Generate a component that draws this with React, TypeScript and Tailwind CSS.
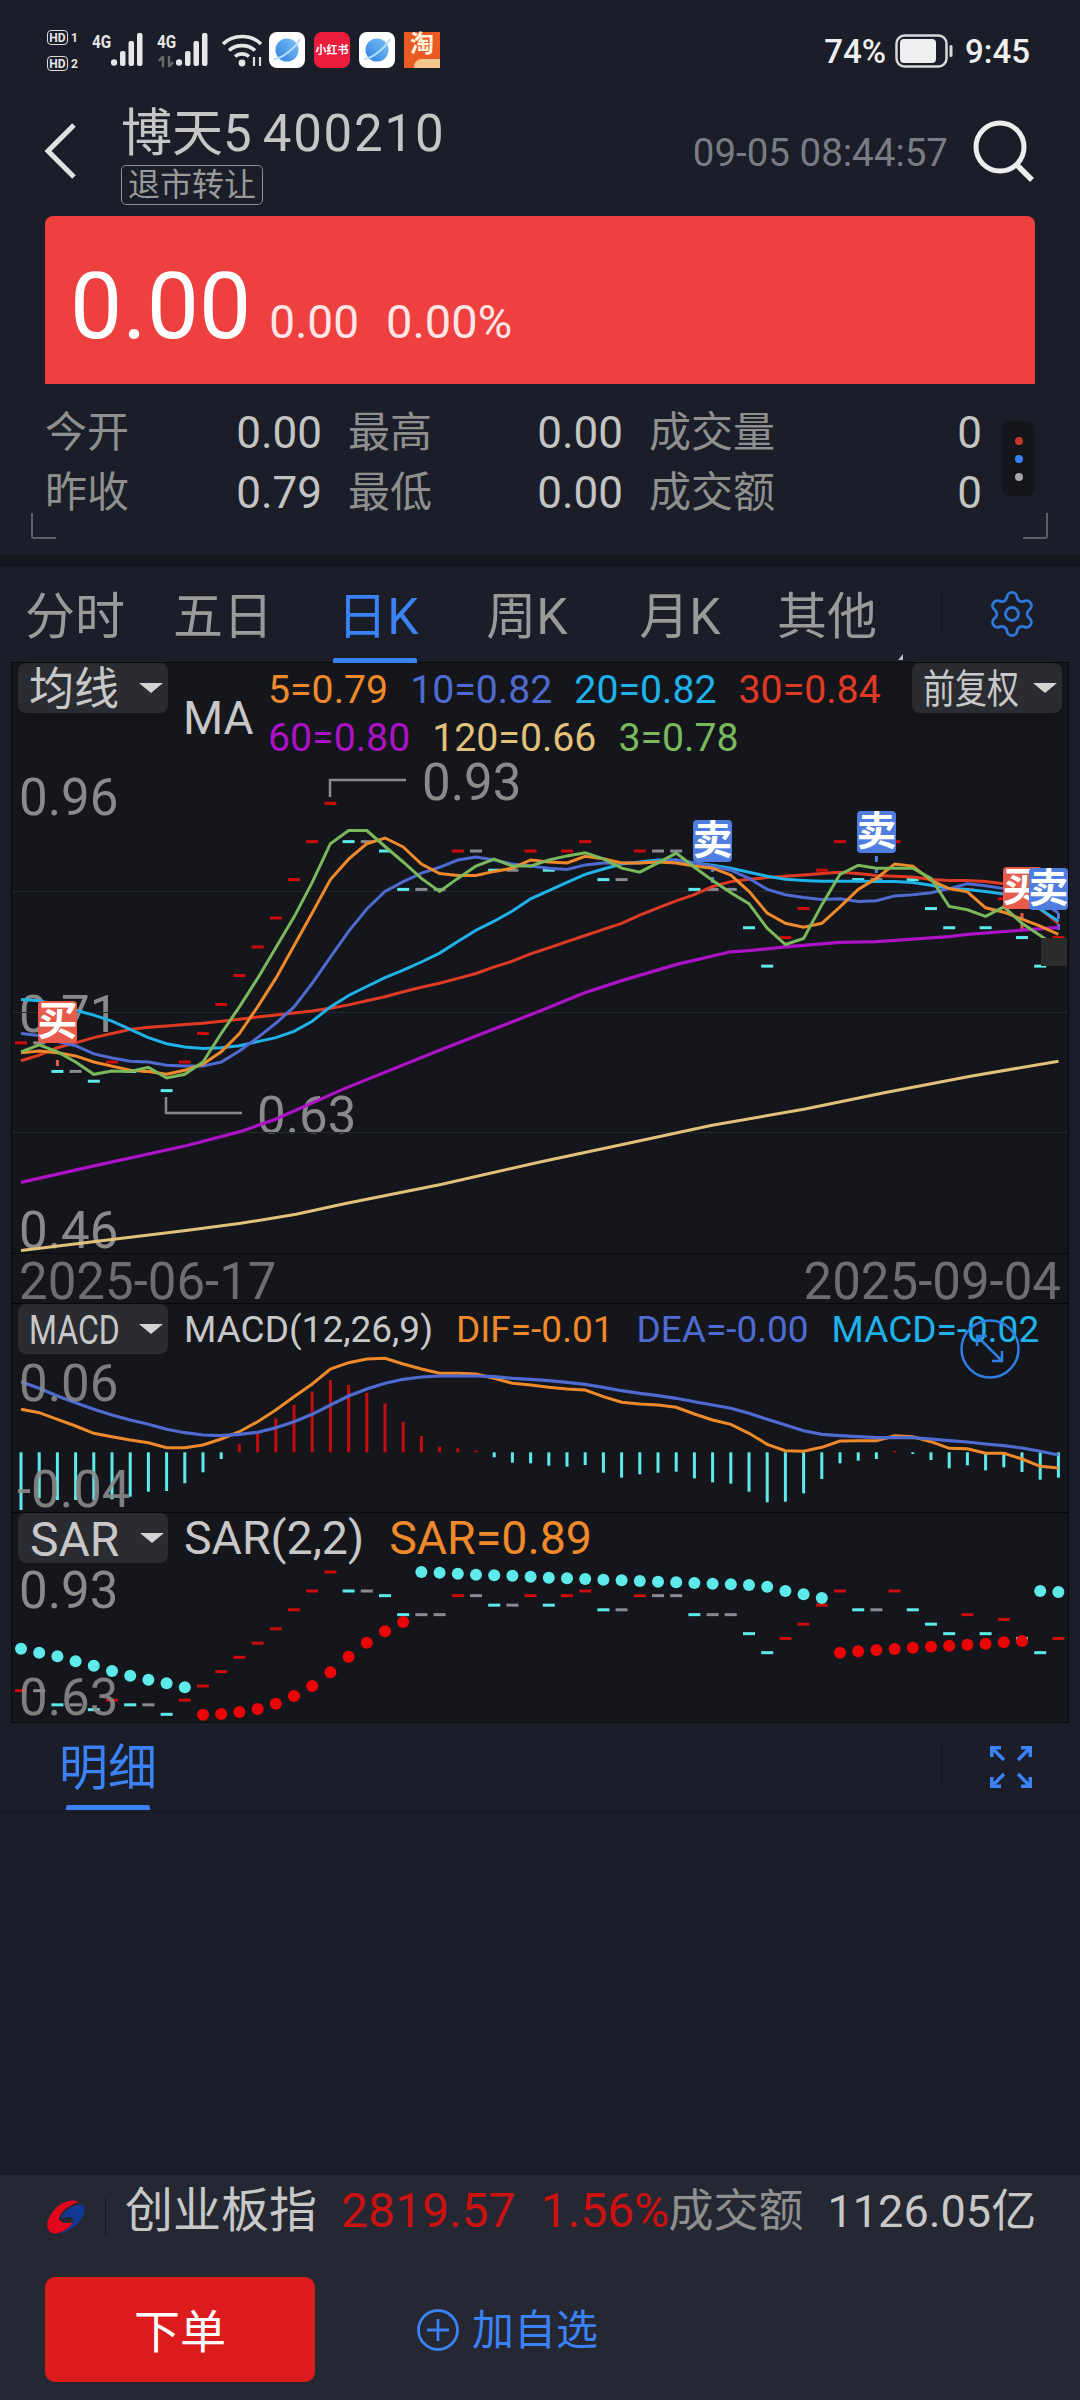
import React from 'react';
import { Settings } from 'lucide-react';

const FONT = "font-['Roboto','Noto_Sans_CJK_SC',sans-serif]";

const X = (i: number) => 21 + 18.2 * i;
const mainY = (z: number) => 660 + z / 2.45;
const lowY = (z: number) => 1290 + z / 3;
const line = (vals: number[], toY: (z: number) => number) =>
  vals.map((z, i) => `${X(i).toFixed(1)},${toY(z).toFixed(1)}`).join(' ');
const freeLine = (vals: number[][]) =>
  vals.map(([x, z]) => `${(x / 2.904).toFixed(1)},${mainY(z).toFixed(1)}`).join(' ');

const COLORS = {
  orange: '#f0892a',
  blue: '#4f6bd1',
  cyan: '#1fb3ea',
  red: '#e03a24',
  purple: '#ad12c7',
  tan: '#e2c27a',
  green: '#7ab85c',
  down: '#5eeaea',
  up: '#e00a0a',
};

const ma5 = [962, 958, 962, 970, 985, 995, 1005, 1008, 1015, 1005, 990, 960, 915, 850, 780, 700, 620, 538, 488, 450, 436, 458, 500, 523, 528, 528, 518, 510, 490, 495, 497, 481, 487, 497, 497, 495, 497, 505, 510, 527, 567, 620, 645, 655, 645, 605, 562, 535, 500, 505, 540, 560, 568, 607, 618, 635, 652, 672];
const ma10 = [915, 920, 935, 945, 965, 975, 983, 985, 993, 995, 995, 985, 958, 925, 890, 850, 792, 728, 665, 610, 567, 543, 522, 508, 490, 483, 490, 500, 505, 510, 513, 502, 497, 497, 497, 493, 490, 497, 505, 515, 535, 562, 575, 582, 587, 585, 592, 590, 578, 575, 570, 560, 548, 553, 560, 572, 590, 620];
const ma20 = [832, 835, 845, 858, 870, 885, 905, 925, 940, 948, 952, 950, 945, 935, 925, 910, 885, 850, 822, 800, 778, 760, 740, 718, 690, 662, 640, 615, 585, 565, 545, 525, 512, 500, 495, 490, 490, 497, 503, 510, 520, 530, 537, 540, 542, 542, 542, 543, 543, 545, 552, 560, 562, 567, 573, 590, 610, 640];
const ma30 = [982, 968, 950, 938, 925, 915, 905, 900, 897, 893, 890, 885, 880, 875, 870, 865, 860, 853, 845, 835, 825, 813, 802, 792, 780, 768, 752, 738, 720, 705, 690, 675, 660, 645, 625, 607, 590, 575, 555, 543, 537, 533, 530, 527, 523, 520, 523, 528, 530, 532, 538, 540, 540, 543, 548, 580, 610, 645];
const ma3 = [960, 943, 960, 985, 1015, 1007, 1008, 998, 1024, 1015, 985, 915, 850, 780, 705, 630, 545, 450, 418, 418, 457, 495, 535, 567, 535, 505, 488, 505, 505, 490, 480, 472, 487, 510, 520, 497, 473, 508, 540, 570, 597, 657, 697, 682, 600, 525, 503, 510, 510, 510, 535, 604, 612, 628, 605, 645, 675, 705];
const ma60 = [[61, 1280], [270, 1240], [540, 1190], [700, 1155], [800, 1125], [1000, 1050], [1280, 955], [1568, 860], [1698, 815], [1808, 785], [1968, 745], [2122, 715], [2175, 712], [2281, 703], [2439, 692], [2545, 690], [2757, 678], [2809, 672], [2968, 662], [3074, 655]];
const ma120 = [[61, 1447], [540, 1398], [700, 1380], [860, 1358], [1000, 1332], [1280, 1285], [1568, 1230], [1818, 1185], [2068, 1140], [2338, 1100], [2568, 1060], [2818, 1020], [3074, 983]];

// closing dashes: [zoom y, colour]
const dashes: [number, string][] = [
  [938, 'r'], [938, 'g'], [1008, 'c'], [1008, 'g'], [1032, 'c'], [985, 'r'], [1008, 'c'], [1008, 'g'], [1055, 'c'], [985, 'r'],
  [915, 'r'], [844, 'r'], [773, 'r'], [703, 'r'], [632, 'r'], [538, 'r'], [445, 'r'], [351, 'r'], [445, 'c'], [445, 'g'],
  [468, 'c'], [562, 'c'], [562, 'g'], [562, 'g'], [468, 'r'], [468, 'g'], [515, 'c'], [515, 'g'], [468, 'r'], [515, 'c'],
  [468, 'r'], [445, 'r'], [538, 'c'], [538, 'g'], [468, 'r'], [468, 'g'], [468, 'g'], [562, 'c'], [562, 'g'], [562, 'g'],
  [656, 'c'], [750, 'c'], [680, 'r'], [609, 'r'], [515, 'r'], [445, 'r'], [538, 'c'], [538, 'g'], [445, 'r'], [538, 'c'],
  [609, 'c'], [656, 'c'], [562, 'r'], [656, 'c'], [585, 'r'], [680, 'c'], [750, 'c'], [680, 'r'],
];
const dashColor: Record<string, string> = { r: '#cc0c0c', c: '#5eeaea', g: '#8a8a92' };

const dif = [358, 368, 388, 408, 430, 440, 450, 458, 473, 473, 465, 447, 425, 395, 360, 320, 282, 237, 218, 207, 205, 222, 237, 250, 250, 252, 265, 280, 285, 292, 297, 300, 320, 337, 342, 345, 352, 372, 390, 403, 430, 463, 482, 484, 472, 453, 452, 452, 437, 440, 455, 475, 476, 490, 490, 507, 529, 534];
const dea = [275, 295, 318, 338, 358, 375, 390, 403, 418, 428, 435, 437, 433, 427, 413, 395, 373, 345, 318, 297, 280, 268, 261, 258, 258, 258, 260, 265, 268, 272, 277, 283, 292, 302, 310, 317, 325, 335, 345, 355, 370, 388, 405, 422, 433, 437, 440, 443, 443, 443, 447, 452, 456, 462, 467, 474, 484, 495];
const hist = [660, 625, 630, 630, 630, 628, 620, 605, 603, 580, 547, 507, 463, 430, 385, 345, 305, 270, 285, 308, 340, 395, 438, 470, 475, 482, 502, 518, 520, 527, 530, 525, 548, 563, 553, 548, 545, 565, 577, 581, 605, 637, 635, 610, 567, 520, 512, 507, 483, 492, 510, 535, 526, 541, 532, 546, 569, 563];

const sarDots: [number, number, string][] = [
  ...[1076, 1088, 1099, 1114, 1127, 1143, 1157, 1169, 1180, 1192].map((z, i) => [i, z, COLORS.down] as [number, number, string]),
  ...[1274, 1272, 1266, 1257, 1241, 1218, 1188, 1147, 1100, 1058, 1024, 996].map((z, i) => [i + 10, z, '#ea0606'] as [number, number, string]),
  ...[846, 848, 851, 854, 856, 857, 860, 863, 865, 867, 869, 871, 873, 875, 877, 879, 881, 883, 885, 890, 903, 913, 924].map((z, i) => [i + 22, z, COLORS.down] as [number, number, string]),
  ...[1088, 1084, 1080, 1077, 1073, 1070, 1067, 1064, 1061, 1057, 1053].map((z, i) => [i + 45, z, '#ea0606'] as [number, number, string]),
  [56, 903, COLORS.down],
  [57, 906, COLORS.down],
];

function Dropdown({ label, size = 'normal' }: { label: string; size?: 'normal' | 'condensed' | 'large' }) {
  const textClass = {
    normal: 'text-[45px]',
    condensed: 'origin-left scale-x-[0.8] text-[40px]',
    large: 'ml-[1px] text-[48px]',
  }[size];
  return (
    <div className="flex h-[50px] w-[150px] items-center rounded-[8px] bg-[#2a2c31] pl-[11px]">
      <span className={`mt-[3px] w-[104px] whitespace-nowrap leading-none text-[#c8c8c8] ${textClass}`}>
        {label}
      </span>
      <span className="ml-[6px] h-0 w-0 border-x-[12px] border-t-[10px] border-x-transparent border-t-[#d4d4d4]" />
    </div>
  );
}

function Signal({ kind, className }: { kind: '买' | '卖'; className: string }) {
  return (
    <div className={`absolute flex h-[42px] w-[39px] items-center justify-center rounded-[4px] text-[40px] leading-none font-bold text-white ${kind === '买' ? 'bg-[#e85a4a]' : 'bg-[#4f7de0]'} ${className}`}>
      {kind}
    </div>
  );
}

function StatCell({ label, value }: { label: string; value: string }) {
  return (
    <div className="flex h-[60px] items-center justify-between pt-[2px]">
      <span className="text-[42px] leading-none text-[#8f8f8f]">{label}</span>
      <span className="text-[44px] leading-none text-[#c4c4c4]">{value}</span>
    </div>
  );
}

function Tab({ label, className, active }: { label: string; className: string; active?: boolean }) {
  return (
    <div className={`relative flex h-full items-center justify-center pt-[4px] text-[50px] leading-none ${active ? 'text-[#3b82f6]' : 'text-[#9a9a9a]'} ${className}`}>
      {label}
      {active && <span className="absolute bottom-0 left-[37px] h-[5px] w-[84px] rounded-t-[2px] bg-[#3b82f6]" />}
    </div>
  );
}

function Signal4G({ dim }: { dim?: boolean }) {
  return (
    <div className="relative h-[36px] w-[55px]">
      <span className="absolute top-0 left-0 origin-left scale-x-[0.85] text-[18px] leading-none font-bold text-[#e6e6e6]">4G</span>
      {dim && (
        <svg className="absolute bottom-[2px] left-0" width="18" height="11" viewBox="0 0 18 11">
          <path d="M6 0v11M6 0 2 5M12 11V0m0 11 4-5" stroke="#6a6a6a" strokeWidth="2.4" fill="none" />
        </svg>
      )}
      <svg className="absolute top-0 left-[19px]" width="36" height="33" viewBox="0 0 36 33">
        <circle cx="3" cy="29.5" r="3.2" fill="#e6e6e6" />
        <rect x="9" y="18" width="5.5" height="15" rx="2" fill="#e6e6e6" />
        <rect x="17.500" y="8" width="5.500" height="25" rx="2" fill="#e6e6e6" />
        <rect x="26" y="0" width="5.500" height="33" rx="2" fill="#e6e6e6" />
      </svg>
    </div>
  );
}

function PlanetIcon() {
  return (
    <div className="flex h-[36px] w-[36px] items-center justify-center rounded-[8px] bg-white">
      <svg width="30" height="30" viewBox="0 0 30 30">
        <defs>
          <linearGradient id="pl" x1="0" y1="1" x2="1" y2="0">
            <stop offset="0" stopColor="#2f7fe0" />
            <stop offset="1" stopColor="#7cc2f6" />
          </linearGradient>
        </defs>
        <circle cx="15" cy="15" r="11.500" fill="url(#pl)" />
        <path d="M2 24C10 24 24 12 28 4" stroke="#b7def9" strokeWidth="2" fill="none" />
      </svg>
    </div>
  );
}

function StatusBar() {
  return (
    <div className="flex h-[100px] items-start justify-between pt-[30px] pr-[50px] pl-[47px]">
      <div className="flex items-start">
        <div className="flex h-[41px] w-[37px] flex-col justify-between">
          {['1', '2'].map((n) => (
            <div key={n} className="flex items-center gap-[3px]">
              <span className="flex h-[15px] w-[21px] items-center justify-center rounded-[4px] border border-[#dcdcdc] text-[12px] leading-none font-bold text-[#e6e6e6]">HD</span>
              <span className="text-[12px] leading-none font-bold text-[#e6e6e6]">{n}</span>
            </div>
          ))}
        </div>
        <div className="ml-[8px] flex pt-[3px]">
          <Signal4G />
          <div className="ml-[10px]">
            <Signal4G dim />
          </div>
        </div>
        <svg className="mt-[3px] ml-[10px]" width="44" height="34" viewBox="0 0 44 34" fill="none">
          <path d="M1 11C11 1 29 1 39 11" stroke="#e6e6e6" strokeWidth="3.6" />
          <path d="M7 17.500C14 11 26 11 33 17.500" stroke="#e6e6e6" strokeWidth="3.6" />
          <path d="M13 23.500C17 20 23 20 27 23.500" stroke="#e6e6e6" strokeWidth="3.6" />
          <circle cx="20" cy="30" r="3.400" fill="#e6e6e6" />
          <path d="M32 24v9M38 33v-9" stroke="#dcdcdc" strokeWidth="2.200" />
        </svg>
        <div className="ml-[3px] flex gap-[9px] pt-[2px]">
          <PlanetIcon />
          <div className="flex h-[36px] w-[36px] items-center justify-center rounded-[8px] bg-[#ee1c3c] text-[11px] leading-none font-bold whitespace-nowrap text-white">小红书</div>
          <PlanetIcon />
          <div className="relative flex h-[36px] w-[36px] items-start justify-center bg-[#ea5a24] text-[24px] leading-none font-bold text-[#fff3dc]">
            淘
            <span className="absolute right-0 bottom-0 h-[9px] w-[26px] rounded-tl-[8px] bg-[#f3c78a]" />
          </div>
        </div>
      </div>
      <div className="flex items-center pt-[4px] text-[33px] leading-none font-medium text-[#efefef]">
        <span>74%</span>
        <svg className="ml-[9px]" width="58" height="34" viewBox="0 0 58 34" fill="none">
          <rect x="1.500" y="1.500" width="50" height="31" rx="8" stroke="#d8d8d8" strokeWidth="2.500" />
          <rect x="5" y="5" width="36" height="24" rx="4" fill="#efefef" />
          <rect x="54.500" y="11" width="3" height="12" rx="1.500" fill="#d8d8d8" />
        </svg>
        <span className="ml-[12px]">9:45</span>
      </div>
    </div>
  );
}

function Header() {
  return (
    <div className="flex h-[116px] pr-[44px] pl-[44px]">
      <svg className="mt-[22px]" width="34" height="58" viewBox="0 0 34 58" fill="none">
        <path d="M30 3 4 29l26 26" stroke="#e2e2e2" strokeWidth="5" />
      </svg>
      <div className="ml-[43px] flex flex-col">
        <div className="flex h-[64px] items-center pt-[2px] text-[51px] leading-none text-[#c6c6c6]">
          <span>博天5</span>
          <span className="ml-[11px] tracking-[1.8px]">400210</span>
        </div>
        <div className="mt-[1px] flex h-[40px] w-[142px] items-center justify-center rounded-[5px] border border-[#8f8f8f] text-[32px] leading-none text-[#9a9a9a]">退市转让</div>
      </div>
      <span className="mt-[34px] ml-auto text-[38.500px] leading-none text-[#797c84]">09-05 08:44:57</span>
      <svg className="mt-[19px] ml-[24px]" width="64" height="64" viewBox="0 0 64 64" fill="none">
        <circle cx="28" cy="28" r="24" stroke="#eeeeee" strokeWidth="5" />
        <path d="M45 46 60 61" stroke="#eeeeee" strokeWidth="5.500" />
      </svg>
    </div>
  );
}

function PriceCard() {
  return (
    <div className="mx-[45px] flex h-[168px] items-baseline rounded-t-[8px] bg-[#ef4040] pt-[44px] pl-[25px] text-white">
      <span className="text-[93px] leading-none">0.00</span>
      <span className="ml-[18px] text-[46px] leading-none text-[#ffe6e6]">0.00</span>
      <span className="ml-[27px] text-[47px] leading-none text-[#ffe6e6]">0.00%</span>
    </div>
  );
}

function Stats() {
  return (
    <div className="relative h-[171px] pt-[18px] pl-[45px]">
      <div className="grid w-[937px] grid-cols-[277px_275px_333px] gap-x-[26px]">
        <StatCell label="今开" value="0.00" />
        <StatCell label="最高" value="0.00" />
        <StatCell label="成交量" value="0" />
        <StatCell label="昨收" value="0.79" />
        <StatCell label="最低" value="0.00" />
        <StatCell label="成交额" value="0" />
      </div>
      <div className="absolute top-[37px] left-[1002px] flex h-[75px] w-[33px] flex-col items-center justify-center gap-[10px] rounded-[8px] bg-[#14161b]">
        <span className="h-[8px] w-[8px] rounded-full bg-[#c0392b]" />
        <span className="h-[8px] w-[8px] rounded-full bg-[#3b82f6]" />
        <span className="h-[8px] w-[8px] rounded-full bg-[#a8a8a8]" />
      </div>
      <span className="absolute top-[129px] left-[31px] h-[26px] w-[25px] rounded-bl-[3px] border-b-[2px] border-l-[2px] border-[#5d5f66]" />
      <span className="absolute top-[129px] left-[1023px] h-[26px] w-[25px] rounded-br-[3px] border-r-[2px] border-b-[2px] border-[#5d5f66]" />
    </div>
  );
}

function Tabs() {
  return (
    <div className="relative flex h-[96px] items-stretch">
      <Tab label="分时" className="w-[150px]" />
      <Tab label="五日" className="w-[146px]" />
      <Tab label="日K" className="w-[164px]" active />
      <Tab label="周K" className="w-[134px]" />
      <Tab label="月K" className="w-[172px]" />
      <Tab label="其他" className="w-[122px]" />
      <span className="mt-[22px] ml-[53px] h-[46px] w-[1px] bg-[#14161b]" />
      <Settings className="mt-[21px] ml-[44px] h-[52px] w-[52px] text-[#2f78d8]" strokeWidth={1.3} />
      <span className="absolute bottom-[3px] left-[898px] h-0 w-0 border-b-[6px] border-l-[5px] border-b-[#bdbdbd] border-l-transparent" />
    </div>
  );
}

function MainChart() {
  return (
    <div className="relative h-[590px]">
      <span className="absolute top-[109px] left-[7px] text-[51px] leading-none text-[#8a8a8a]">0.96</span>
      <span className="absolute top-[326px] left-[7px] text-[51px] leading-none text-[#8a8a8a]">0.71</span>
      <span className="absolute top-[542px] left-[7px] text-[51px] leading-none text-[#8a8a8a]">0.46</span>
      <span className="absolute top-[94px] left-[410px] text-[51px] leading-none text-[#8a8a8a]">0.93</span>
      <span className="absolute top-[427px] left-[245px] text-[51px] leading-none text-[#8a8a8a]">0.63</span>

      <svg className="absolute inset-0" width="1056" height="590" viewBox="12 663 1056 590" fill="none">
        {[891, 1012, 1132].map((y) => (
          <rect key={y} x="12" y={y} width="1056" height="1" fill="#24272b" />
        ))}
        <path d="M330 797V780H406M166 1097V1113H242" stroke="#8a8a8a" strokeWidth="2.500" />
        {dashes.map(([z, c], i) => (
          <rect key={i} x={X(i) - 6} y={mainY(z) - 1.5} width="12" height="3" fill={dashColor[c]} />
        ))}
        <path d={`M${X(2)} ${mainY(980)}V${mainY(996)}M${X(55)} ${mainY(620)}V${mainY(665)}`} stroke="#e85a4a" strokeWidth="3" strokeDasharray="6 5" />
        <path d={`M${X(38)} ${mainY(505)}V${mainY(548)}M${X(47)} ${mainY(480)}V${mainY(540)}M${X(57)} ${mainY(620)}V${mainY(665)}`} stroke="#4f7de0" strokeWidth="3" strokeDasharray="6 5" />
        <polyline points={freeLine(ma120)} stroke={COLORS.tan} strokeWidth="3" />
        <polyline points={freeLine(ma60)} stroke={COLORS.purple} strokeWidth="3.200" />
        <polyline points={line(ma30, mainY)} stroke={COLORS.red} strokeWidth="3" />
        <polyline points={line(ma20, mainY)} stroke={COLORS.cyan} strokeWidth="3" />
        <polyline points={line(ma10, mainY)} stroke={COLORS.blue} strokeWidth="3" />
        <polyline points={line(ma5, mainY)} stroke={COLORS.orange} strokeWidth="3" />
        <polyline points={line(ma3, mainY)} stroke={COLORS.green} strokeWidth="3" />
      </svg>

      <div className="absolute top-0 left-[6px]">
        <Dropdown label="均线" />
      </div>
      <div className="absolute top-0 left-[900px]">
        <Dropdown label="前复权" size="condensed" />
      </div>
      <span className="absolute top-[32px] left-[171px] text-[46px] leading-none text-[#c8c8c8]">MA</span>
      <div className="absolute top-[8px] left-[256px] flex gap-[22px] text-[39.250px] leading-none">
        <span className="text-[#f0892a]">5=0.79</span>
        <span className="text-[#4f6bd1]">10=0.82</span>
        <span className="text-[#1fb3ea]">20=0.82</span>
        <span className="text-[#e03a24]">30=0.84</span>
      </div>
      <div className="absolute top-[56px] left-[256px] flex gap-[22px] text-[39.250px] leading-none">
        <span className="text-[#ad12c7]">60=0.80</span>
        <span className="text-[#e2c27a]">120=0.66</span>
        <span className="text-[#7ab85c]">3=0.78</span>
      </div>

      <div className="absolute top-[275px] left-[1029px] h-[28px] w-[26px] bg-[#2c2c2c]" />
      <Signal kind="买" className="top-[338px] left-[26px]" />
      <Signal kind="卖" className="top-[157px] left-[681px]" />
      <Signal kind="卖" className="top-[148px] left-[845px]" />
      <Signal kind="买" className="top-[204px] left-[991px]" />
      <Signal kind="卖" className="top-[205px] left-[1017px]" />
    </div>
  );
}

function MacdChart() {
  return (
    <div className="relative h-[209px] border-b border-[#08090b]">
      <svg className="absolute inset-0" width="1056" height="209" viewBox="12 1304 1056 209" fill="none">
        {hist.map((z, i) => {
          const base = lowY(487);
          const y = lowY(z);
          return (
            <rect
              key={i}
              x={X(i) - 1.5}
              y={Math.min(base, y)}
              width="3"
              height={Math.abs(y - base)}
              fill={z < 487 ? '#c40c0c' : COLORS.down}
            />
          );
        })}
        <polyline points={line(dif, lowY)} stroke={COLORS.orange} strokeWidth="3" />
        <polyline points={line(dea, lowY)} stroke={COLORS.blue} strokeWidth="3.200" />
      </svg>
      <span className="absolute top-[54px] left-[7px] text-[51px] leading-none text-[#8a8a8a] opacity-90">0.06</span>
      <span className="absolute top-[160px] left-[5px] text-[51px] leading-none text-[#8a8a8a] opacity-90">-0.04</span>
      <div className="absolute top-0 left-[6px]">
        <Dropdown label="MACD" size="condensed" />
      </div>
      <div className="absolute top-[6px] left-[172px] flex items-center gap-[23px] text-[37px] leading-[40px] whitespace-nowrap">
        <span className="text-[#c8c8c8]">MACD(12,26,9)</span>
        <span className="text-[#f0892a]">DIF=-0.01</span>
        <span className="text-[#4f6bd1]">DEA=-0.00</span>
        <span className="text-[#1fb3ea]">MACD=-0.02</span>
      </div>
      <svg className="absolute top-[15px] left-[948px]" width="60" height="60" viewBox="0 0 60 60" fill="none" stroke="#2f7fe0" strokeWidth="2.500">
        <circle cx="30" cy="30" r="28.500" />
        <path d="M17 17 42 42M17 27V17H27M32 42H42V32" />
      </svg>
    </div>
  );
}

function SarChart() {
  return (
    <div className="relative h-[209px]">
      <svg className="absolute inset-0" width="1056" height="209" viewBox="12 1513 1056 209" fill="none">
        {dashes.map(([z, c], i) => (
          <rect key={i} x={X(i) - 6} y={lowY(846 + (z - 351) * 0.6065) - 1.5} width="12" height="3" fill={dashColor[c]} />
        ))}
        {sarDots.map(([i, z, c]) => (
          <circle key={i} cx={X(i)} cy={lowY(z)} r="6" fill={c} />
        ))}
      </svg>
      <span className="absolute top-[52px] left-[7px] text-[51px] leading-none text-[#8a8a8a]">0.93</span>
      <span className="absolute top-[159px] left-[7px] text-[51px] leading-none text-[#8a8a8a] opacity-90">0.63</span>
      <div className="absolute top-0 left-[6px]">
        <Dropdown label="SAR" size="large" />
      </div>
      <div className="absolute top-[2px] left-[172px] flex items-center gap-[25px] text-[46.500px] leading-[46px] whitespace-nowrap">
        <span className="text-[#c8c8c8]">SAR(2,2)</span>
        <span className="text-[#f0892a]">SAR=0.89</span>
      </div>
    </div>
  );
}

function Chart() {
  return (
    <div className="mx-[12px] w-[1056px] bg-[#14161c] ring-1 ring-[#08090b]">
      <MainChart />
      <div className="flex h-[51px] items-center justify-between border-y border-[#08090b] px-[7px] pt-[6px] text-[51px] leading-none text-[#6e6e6e]">
        <span>2025-06-17</span>
        <span>2025-09-04</span>
      </div>
      <MacdChart />
      <SarChart />
    </div>
  );
}

function DetailTab() {
  return (
    <div className="flex h-[91px] items-start border-b border-[#14161b]">
      <div className="relative ml-[58px] flex h-[88px] w-[100px] items-center justify-center pt-[4px] text-[49px] leading-none text-[#3b82f6]">
        明细
        <span className="absolute bottom-0 left-[8px] h-[5px] w-[84px] rounded-t-[2px] bg-[#3b82f6]" />
      </div>
      <span className="mt-[22px] ml-[783px] h-[46px] w-[1px] bg-[#14161b]" />
      <svg className="mt-[24px] ml-[48px]" width="42" height="42" viewBox="0 0 42 42" fill="none" stroke="#3b82f6" strokeWidth="3.500">
        <path d="M1.750 11V1.750H11M2.500 2.500 14 14M31 1.750H40.250V11M39.500 2.500 28 14M1.750 31V40.250H11M2.500 39.500 14 28M40.250 31V40.250H31M39.500 39.500 28 28" />
      </svg>
    </div>
  );
}

function BottomBar() {
  return (
    <div className="h-[225px] bg-[#252733]">
      <div className="flex h-[72px] items-center pl-[45px] leading-none">
        <svg className="mt-[10px]" width="42" height="37" viewBox="40 35 135 120">
          <path d="M150 48C110 30 65 65 48 110C42 135 55 152 75 150C100 145 125 130 130 110C118 120 85 118 85 100C90 80 120 55 150 48Z" fill="#e2071b" />
          <path d="M162 55C175 75 165 105 130 130C110 145 95 150 85 150C110 140 130 125 132 105C130 90 100 100 90 100C100 75 135 55 162 55Z" fill="#123a94" />
        </svg>
        <span className="mt-[10px] ml-[18px] h-[37px] w-[1px] bg-[#14161b]" />
        <span className="ml-[19px] w-[192px] text-[48px] whitespace-nowrap text-[#c8c8c8]">创业板指</span>
        <span className="ml-[24px] text-[48px] text-[#cc1111]">2819.57</span>
        <span className="ml-[25px] w-[128px] text-[48px] whitespace-nowrap text-[#cc1111]">1.56%</span>
        <span className="text-[45px] whitespace-nowrap text-[#8f8f8f]">成交额</span>
        <span className="ml-[24px] text-[45px] whitespace-nowrap text-[#c8c8c8]">1126.05亿</span>
      </div>
      <div className="mt-[30px] flex items-center pl-[45px]">
        <div className="flex h-[105px] w-[270px] items-center justify-center rounded-[10px] bg-[#dc1c1c] pt-[4px] text-[46px] leading-none text-white">下单</div>
        <svg className="ml-[102px]" width="42" height="42" viewBox="0 0 42 42" fill="none" stroke="#3b82f6" strokeWidth="2.800">
          <circle cx="21" cy="21" r="19.500" />
          <path d="M10 21H32M21 10V32" />
        </svg>
        <span className="mt-[3px] ml-[13px] text-[42px] leading-none text-[#3b82f6]">加自选</span>
      </div>
    </div>
  );
}

export default function App() {
  return (
    <div className={`flex h-[2400px] w-[1080px] flex-col overflow-hidden bg-[#1b1e28] ${FONT}`}>
      <StatusBar />
      <Header />
      <PriceCard />
      <Stats />
      <div className="h-[12px] bg-[#14161b]" />
      <Tabs />
      <Chart />
      <DetailTab />
      <div className="flex-1" />
      <BottomBar />
    </div>
  );
}
